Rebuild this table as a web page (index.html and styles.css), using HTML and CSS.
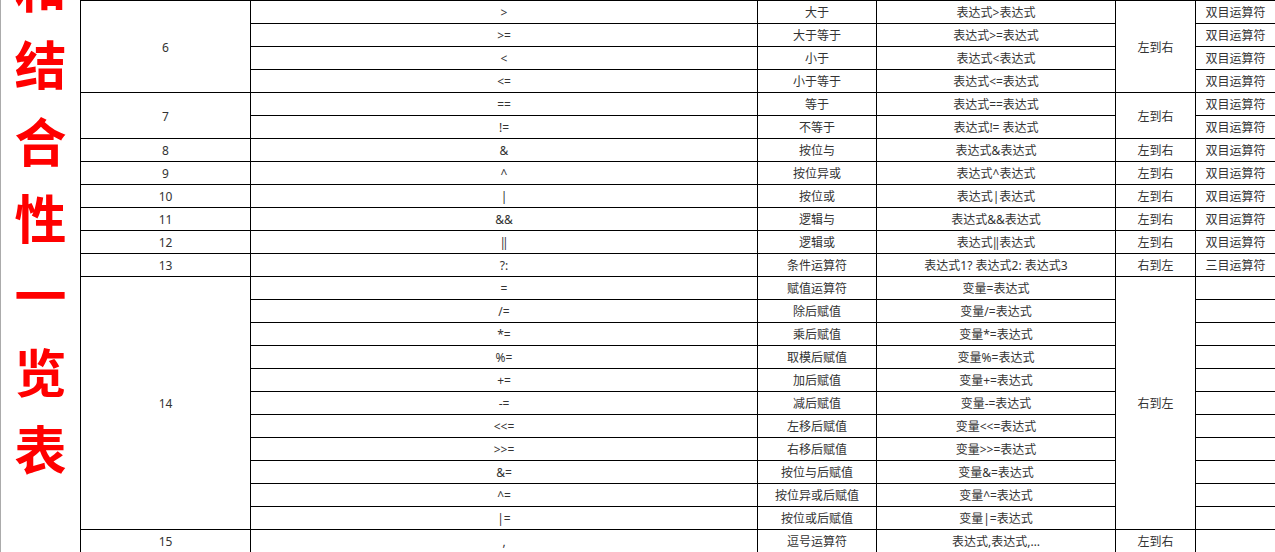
FILE: index.html
```html
<!DOCTYPE html>
<html lang="zh-CN">
<head>
<meta charset="utf-8">
<title>运算符优先级和结合性一览表</title>
<link rel="stylesheet" href="styles.css">
</head>
<body>
<div class="page">
  <div class="title-col">
    <div class="title">
      <span>和</span><span>结</span><span>合</span><span>性</span><span>一</span><span>览</span><span>表</span>
    </div>
  </div>
  <table class="ops">
    <colgroup>
      <col class="c-prio"><col class="c-op"><col class="c-name"><col class="c-form"><col class="c-assoc"><col class="c-desc">
    </colgroup>
    <tbody>
      <tr><td rowspan="4">6</td><td>&gt;</td><td>大于</td><td>表达式&gt;表达式</td><td rowspan="4">左到右</td><td>双目运算符</td></tr>
      <tr><td>&gt;=</td><td>大于等于</td><td>表达式&gt;=表达式</td><td>双目运算符</td></tr>
      <tr><td>&lt;</td><td>小于</td><td>表达式&lt;表达式</td><td>双目运算符</td></tr>
      <tr><td>&lt;=</td><td>小于等于</td><td>表达式&lt;=表达式</td><td>双目运算符</td></tr>
      <tr><td rowspan="2">7</td><td>==</td><td>等于</td><td>表达式==表达式</td><td rowspan="2">左到右</td><td>双目运算符</td></tr>
      <tr><td>!=</td><td>不等于</td><td>表达式!= 表达式</td><td>双目运算符</td></tr>
      <tr><td>8</td><td>&amp;</td><td>按位与</td><td>表达式&amp;表达式</td><td>左到右</td><td>双目运算符</td></tr>
      <tr><td>9</td><td>^</td><td>按位异或</td><td>表达式^表达式</td><td>左到右</td><td>双目运算符</td></tr>
      <tr><td>10</td><td>|</td><td>按位或</td><td>表达式|表达式</td><td>左到右</td><td>双目运算符</td></tr>
      <tr><td>11</td><td>&amp;&amp;</td><td>逻辑与</td><td>表达式&amp;&amp;表达式</td><td>左到右</td><td>双目运算符</td></tr>
      <tr><td>12</td><td>‖</td><td>逻辑或</td><td>表达式‖表达式</td><td>左到右</td><td>双目运算符</td></tr>
      <tr><td>13</td><td>?:</td><td>条件运算符</td><td>表达式1? 表达式2: 表达式3</td><td>右到左</td><td>三目运算符</td></tr>
      <tr><td rowspan="11">14</td><td>=</td><td>赋值运算符</td><td>变量=表达式</td><td rowspan="11">右到左</td><td></td></tr>
      <tr><td>/=</td><td>除后赋值</td><td>变量/=表达式</td><td></td></tr>
      <tr><td>*=</td><td>乘后赋值</td><td>变量*=表达式</td><td></td></tr>
      <tr><td>%=</td><td>取模后赋值</td><td>变量%=表达式</td><td></td></tr>
      <tr><td>+=</td><td>加后赋值</td><td>变量+=表达式</td><td></td></tr>
      <tr><td>-=</td><td>减后赋值</td><td>变量-=表达式</td><td></td></tr>
      <tr><td>&lt;&lt;=</td><td>左移后赋值</td><td>变量&lt;&lt;=表达式</td><td></td></tr>
      <tr><td>&gt;&gt;=</td><td>右移后赋值</td><td>变量&gt;&gt;=表达式</td><td></td></tr>
      <tr><td>&amp;=</td><td>按位与后赋值</td><td>变量&amp;=表达式</td><td></td></tr>
      <tr><td>^=</td><td>按位异或后赋值</td><td>变量^=表达式</td><td></td></tr>
      <tr><td>|=</td><td>按位或后赋值</td><td>变量|=表达式</td><td></td></tr>
      <tr><td>15</td><td>,</td><td>逗号运算符</td><td>表达式,表达式,…</td><td>左到右</td><td></td></tr>
    </tbody>
  </table>
</div>
</body>
</html>
```

FILE: styles.css
```css
html, body {
  margin: 0;
  padding: 0;
  background: #fff;
  overflow: hidden;
}

.page {
  display: flex;
  align-items: flex-start;
  width: 1275px;
  height: 552px;
  overflow: hidden;
}

.title-col {
  flex: 0 0 80px;
  box-sizing: border-box;
  height: 552px;
  border-left: 1px solid #ababab;
  overflow: hidden;
}

.title {
  display: flex;
  flex-direction: column;
  align-items: center;
  margin-top: -53px;
  font-family: "Noto Sans CJK SC", "Noto Sans", sans-serif;
  font-weight: 700;
  font-size: 52px;
  line-height: 77px;
  color: #ff0000;
}

.ops {
  flex: 0 0 auto;
  border-collapse: separate;
  border-spacing: 0;
  table-layout: fixed;
  width: 1196px;
  border-top: 1px solid #000;
  border-left: 1px solid #000;
  font-family: "Noto Sans", "Noto Sans CJK SC", sans-serif;
  font-size: 12px;
  color: #333;
}

.c-prio { width: 170px; }
.c-op { width: 507px; }
.c-name { width: 119px; }
.c-form { width: 239px; }
.c-assoc { width: 80px; }
.c-desc { width: 80px; }

.ops tr {
  height: 23px;
}

.ops td {
  box-sizing: border-box;
  padding: 2px 0 0;
  border-right: 1px solid #000;
  border-bottom: 1px solid #000;
  text-align: center;
  vertical-align: middle;
  line-height: 16px;
  white-space: nowrap;
}
```
